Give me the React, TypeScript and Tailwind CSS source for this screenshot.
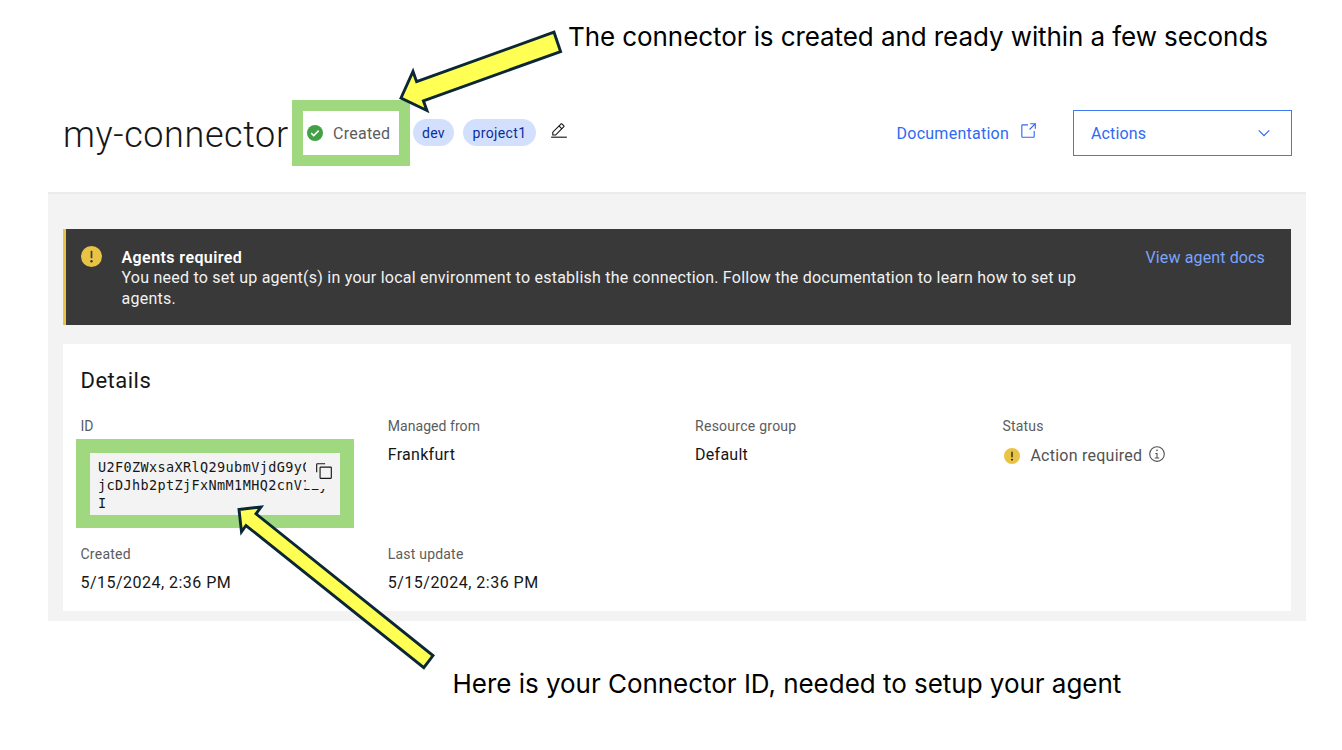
import type { ReactNode } from "react";

function EditIcon() {
  return (
    <svg viewBox="0 0 32 32" className="size-[18px]" fill="#161616">
      <path d="M2 26H30V28H2z" />
      <path d="M25.4 9c.8-.8.8-2 0-2.8l-3.6-3.6c-.8-.8-2-.8-2.8 0l-15 15V24h6.4L25.4 9zM20.4 4L24 7.6l-3 3L17.4 7 20.4 4zM6 22v-3.6l10-10 3.6 3.6-10 10H6z" />
    </svg>
  );
}

function LaunchIcon() {
  return (
    <svg viewBox="0 0 32 32" className="size-[18px]" fill="currentColor">
      <path d="M26 28H6a2 2 0 0 1-2-2V6a2 2 0 0 1 2-2h10v2H6v20h20V16h2v10a2 2 0 0 1-2 2z" />
      <path d="M20 2v2h6.586L18 12.586 19.414 14 28 5.414V12h2V2z" />
    </svg>
  );
}

function ChevronIcon() {
  return (
    <svg viewBox="0 0 16 16" className="size-[18px]" fill="currentColor">
      <path d="M8 11L3 6l.7-.7L8 9.6l4.3-4.3.7.7z" />
    </svg>
  );
}

function CheckIcon() {
  return (
    <svg viewBox="0 0 16 16" className="size-4 shrink-0">
      <circle cx="8" cy="8" r="8" fill="#43a047" />
      <path d="M4.2 8.1l2.5 2.5 5-5" fill="none" stroke="#fff" strokeWidth="1.5" />
    </svg>
  );
}

function WarningIcon({ className, mark }: { className: string; mark: string }) {
  return (
    <svg viewBox="0 0 20 20" className={className}>
      <circle cx="10" cy="10" r="10" fill="#e9c344" />
      <path d="M9.2 4.6h1.6v7H9.2z" fill={mark} />
      <circle cx="10" cy="14.6" r="1.15" fill={mark} />
    </svg>
  );
}

function InfoIcon() {
  return (
    <svg viewBox="0 0 32 32" className="size-[18px]" fill="#525252">
      <path d="M17 22v-8h-4v2h2v6h-3v2h8v-2z" />
      <path d="M16 8a1.5 1.5 0 1 0 1.5 1.5A1.5 1.5 0 0 0 16 8z" />
      <path d="M16 30a14 14 0 1 1 14-14 14 14 0 0 1-14 14zm0-26a12 12 0 1 0 12 12A12 12 0 0 0 16 4z" />
    </svg>
  );
}

function CopyIcon() {
  return (
    <svg viewBox="0 0 32 32" className="size-[18px]" fill="#161616">
      <path d="M28 10v18H10V10h18m0-2H10a2 2 0 0 0-2 2v18a2 2 0 0 0 2 2h18a2 2 0 0 0 2-2V10a2 2 0 0 0-2-2z" />
      <path d="M4 18H2V4a2 2 0 0 1 2-2h14v2H4z" />
    </svg>
  );
}

function Label({ children, className = "" }: { children: ReactNode; className?: string }) {
  return <div className={`text-sm leading-5 text-[#5c5c5c] ${className}`}>{children}</div>;
}

export default function App() {
  return (
    <div className="relative flex h-[750px] w-[1342px] flex-col overflow-hidden bg-white font-['Roboto',sans-serif] text-base text-[#161616]">
      <p className="h-[75px] whitespace-nowrap pl-[568px] pt-[21px] font-['Inter',sans-serif] text-[26px] leading-8 tracking-[-0.08px] text-black">
        The connector is created and ready within a few seconds
      </p>

      <header className="flex h-[117px] items-center pb-0.5 pl-[63px] pr-[50px]">
        <h1 className="w-[244px] shrink-0 whitespace-nowrap pt-1 text-4xl font-light tracking-[0.6px]">my-connector</h1>
        <div className="flex w-[106px] shrink-0 items-center gap-2.5">
          <CheckIcon />
          <span className="pt-0.5 tracking-[0.25px] text-[#5c5c5c]">Created</span>
        </div>
        <div className="flex items-center gap-[9px] text-sm text-[#0a2c9c]">
          <span className="flex h-[27px] w-[41px] items-center justify-center rounded-full bg-[#d3e0fd] tracking-[0.3px]">dev</span>
          <span className="flex h-[27px] w-[73px] items-center justify-center rounded-full bg-[#d3e0fd] tracking-[0.4px]">project1</span>
        </div>
        <div className="mb-1 ml-3.5">
          <EditIcon />
        </div>
        <div className="ml-auto flex items-center text-[#2f69f3]">
          <a className="flex w-[176.5px] items-center tracking-[0.26px]">
            <span className="w-[122.5px] pt-0.5">Documentation</span>
            <span className="mb-1">
              <LaunchIcon />
            </span>
          </a>
          <button className="flex h-[46px] w-[219px] items-center justify-between border border-[#4178f4] pl-[17px] pr-[18px] tracking-[0.15px]">
            <span className="pt-0.5">Actions</span>
            <ChevronIcon />
          </button>
        </div>
      </header>

      <main className="ml-12 flex h-[429px] w-[1258px] flex-col gap-[19px] border-t-2 border-[#ebebeb] bg-[#f3f3f3] px-[15px] pt-[35px]">
        <section className="flex h-24 shrink-0 border-l-[3px] border-[#e9c344] bg-[#393939] pl-[15px] pr-[26px] pt-[17px] text-[#f1f1f1]">
          <WarningIcon className="size-[21px] shrink-0" mark="#393939" />
          <div className="ml-[19.5px] pt-[1.5px] leading-[20.5px]">
            <h2 className="font-semibold tracking-[0.42px] text-white">Agents required</h2>
            <p className="w-[990px] tracking-[0.235px]">
              You need to set up agent(s) in your local environment to establish the connection. Follow the documentation to learn how to set up
              <br />
              agents.
            </p>
          </div>
          <a className="ml-auto whitespace-nowrap pt-[1.5px] leading-[20.5px] tracking-[0.13px] text-[#7aa5fb]">View agent docs</a>
        </section>

        <section className="h-[267px] shrink-0 bg-white pl-[17.5px] pt-[22px]">
          <h2 className="text-[22px] leading-[30px] tracking-[0.5px]">Details</h2>
          <div className="mt-5 grid grid-cols-[307.3px_307.3px_307.3px_1fr]">
            <div className="h-[128px]">
              <Label>ID</Label>
              <div className="relative ml-[9.5px] mt-[17px] h-[62px] w-[251px] overflow-hidden whitespace-nowrap bg-[#f3f3f3] pl-2 pt-[5px] font-['DejaVu_Sans_Mono',monospace] text-[13.5px] leading-[18px] tracking-[0.38px]">
                <div>U2F0ZWxsaXRlQ29ubmVjdG9yC</div>
                <div>jcDJhb2ptZjFxNmM1MHQ2cnV1Zy</div>
                <div>I</div>
                <div className="absolute right-0 top-0 flex h-[36px] w-[35px] items-center justify-center bg-[#f3f3f3]">
                  <CopyIcon />
                </div>
              </div>
            </div>
            <div>
              <Label className="tracking-[0.05px]">Managed from</Label>
              <div className="mt-[9px] leading-5 tracking-[0.28px]">Frankfurt</div>
            </div>
            <div>
              <Label className="tracking-[0.25px]">Resource group</Label>
              <div className="mt-[9px] leading-5 tracking-[0.25px]">Default</div>
            </div>
            <div>
              <Label className="tracking-[0.2px]">Status</Label>
              <div className="mt-[9px] flex items-center text-[#525252]">
                <WarningIcon className="ml-0.5 size-4 shrink-0" mark="#161616" />
                <span className="ml-2.5 w-[118px] whitespace-nowrap leading-5 tracking-[0.25px]">Action required</span>
                <span className="mb-1">
                  <InfoIcon />
                </span>
              </div>
            </div>
            <div>
              <Label className="tracking-[0.25px]">Created</Label>
              <div className="mt-[9px] leading-5 tracking-[0.48px]">5/15/2024, 2:36 PM</div>
            </div>
            <div>
              <Label className="tracking-[0.2px]">Last update</Label>
              <div className="mt-[9px] leading-5 tracking-[0.48px]">5/15/2024, 2:36 PM</div>
            </div>
          </div>
        </section>
      </main>

      <p className="mt-[47px] whitespace-nowrap pl-[452.5px] font-['Inter',sans-serif] text-[26px] leading-8 tracking-[-0.03px] text-black">
        Here is your Connector ID, needed to setup your agent
      </p>

      <div className="absolute left-[292px] top-[100px] h-[66px] w-[118px] border-[11px] border-[#9fd87e]" />
      <div className="absolute left-[76px] top-[439px] h-[89px] w-[278px] border-[14px] border-b-[13px] border-[#9fd87e]" />
      <svg viewBox="0 0 1342 750" className="pointer-events-none absolute left-0 top-0 h-[750px] w-[1342px]" fill="#ffff54" stroke="#0b2735" strokeWidth="2.9">
        <path d="M401 98l12-26.5 3.6 10.2L554 32.2l6.6 19.3-137.2 49.3 3.5 9.7z" />
        <path d="M239 509.5l22-2.5-5 6.8 177 141.7-9.2 12.2L246 525.5l-4.5 6.3z" />
      </svg>
    </div>
  );
}
